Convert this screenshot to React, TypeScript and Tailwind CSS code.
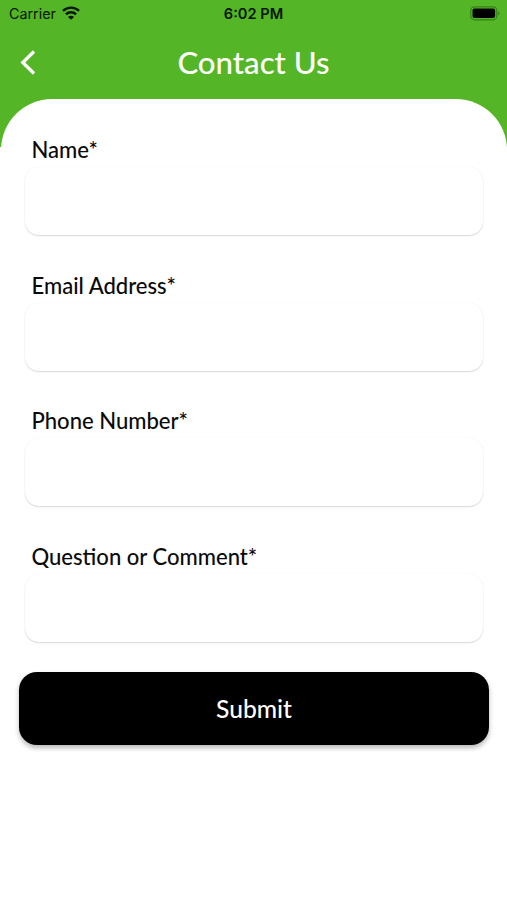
const FIELDS = [
  { id: 'name', label: 'Name*', type: 'text' },
  { id: 'email', label: 'Email Address*', type: 'email' },
  { id: 'phone', label: 'Phone Number*', type: 'tel' },
  { id: 'comment', label: 'Question or Comment*', type: 'text' },
];

function WifiIcon() {
  return (
    <svg width="18" height="14" viewBox="0 0 18 14" fill="none" stroke="#071502" strokeWidth="2.4">
      <path d="M1 4.9a11.4 11.4 0 0 1 16 0" />
      <path d="M3.9 8.4a7.3 7.3 0 0 1 10.2 0" />
      <path d="M9 13.8 6 10.9a4.2 4.2 0 0 1 6 0Z" fill="#071502" stroke="none" />
    </svg>
  );
}

function BatteryIcon() {
  return (
    <svg width="31" height="15" viewBox="0 0 31 15" fill="none">
      <rect x="0.8" y="0.8" width="26" height="13" rx="3.8" stroke="#36801a" strokeWidth="1.2" />
      <rect x="2.5" y="2.5" width="22.6" height="9.6" rx="2" fill="#000" />
      <path d="M28.2 5.2c1.8.7 1.8 3.5 0 4.2Z" fill="#36801a" />
    </svg>
  );
}

function StatusBar() {
  return (
    <div className="grid h-[27px] grid-cols-3 items-center pl-[9px] pr-[6px] font-['Inter',sans-serif] text-[#071502]">
      <div className="flex items-center gap-[6px]">
        <span className="pt-px text-[14.3px] leading-none">Carrier</span>
        <WifiIcon />
      </div>
      <span className="pr-[3px] pt-px text-center text-[14.6px] font-semibold leading-none">6:02 PM</span>
      <div className="flex justify-end">
        <BatteryIcon />
      </div>
    </div>
  );
}

function Header() {
  return (
    <div className="grid h-[71.5px] grid-cols-[60px_1fr_60px] items-center">
      <button className="pl-[20px]" aria-label="Back">
        <svg width="16" height="25" viewBox="0 0 16 25" fill="none" stroke="#fff" strokeWidth="3.3">
          <path d="M14 1.5 2.8 12.5 14 23.5" />
        </svg>
      </button>
      <h1 className="text-center text-[31.2px] font-medium leading-none text-white">Contact Us</h1>
    </div>
  );
}

export default function App() {
  return (
    <div className="h-[900px] w-full overflow-hidden bg-[linear-gradient(#54b626_147px,#fff_147px)] font-['Lato',sans-serif]">
      <StatusBar />
      <Header />
      <form className="ml-px h-full rounded-t-[51px] bg-white pl-[18px] pr-[18px] pt-[36.6px]">
        {FIELDS.map((field) => (
          <div key={field.id} className="flex h-[135.65px] flex-col px-[6px]">
            <label htmlFor={field.id} className="h-[32px] pl-[6.5px] text-[22.05px] font-medium leading-[30px] text-[#0a0a0a]">
              {field.label}
            </label>
            <input
              id={field.id}
              type={field.type}
              className="h-[68px] w-full rounded-[14px] bg-white px-4 text-xl shadow-[0_1px_1.5px_rgba(0,0,0,0.15),0_0_1px_rgba(0,0,0,0.08)] outline-none"
            />
          </div>
        ))}
        <button
          type="button"
          className="mt-[-5.7px] h-[73px] w-full rounded-[18px] bg-black pt-[2px] text-[24.6px] font-medium text-white shadow-[0_3px_5px_rgba(0,0,0,0.28)]"
        >
          Submit
        </button>
      </form>
    </div>
  );
}
